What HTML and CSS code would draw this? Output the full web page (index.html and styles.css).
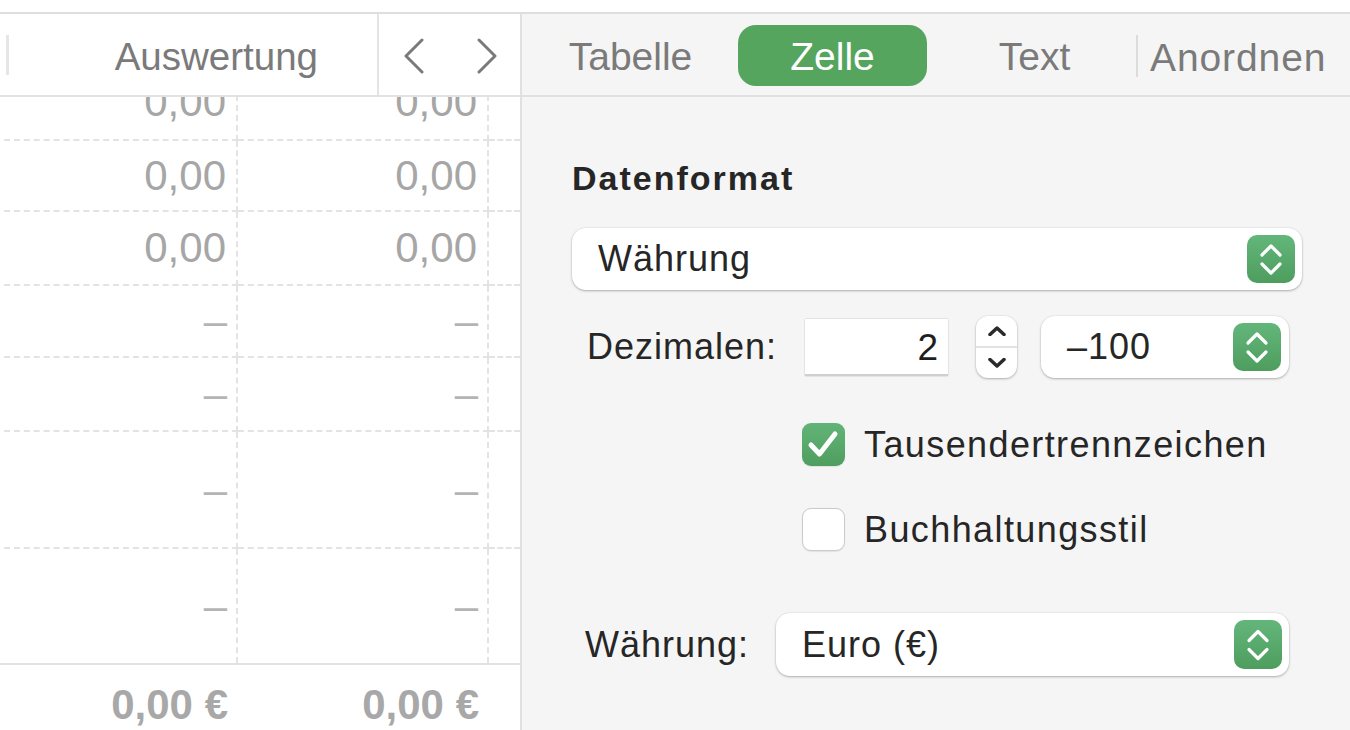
FILE: index.html
```html
<!DOCTYPE html>
<html lang="de">
<head>
<meta charset="utf-8">
<title>Zelle – Datenformat</title>
<link rel="stylesheet" href="styles.css">
</head>
<body>
<div class="app">
  <div class="topstrip"></div>
  <div class="main">
    <section class="sheet">
      <div class="sheet-bar">
        <span class="bar-mark"></span>
        <div class="sheet-title">Auswertung</div>
        <span class="vdiv"></span>
        <div class="nav">
          <svg class="nav-icon" viewBox="0 0 21 36" width="21" height="36"><polyline points="19,2 3,18 19,34"/></svg>
          <svg class="nav-icon" viewBox="0 0 21 36" width="21" height="36"><polyline points="2,2 18,18 2,34"/></svg>
        </div>
      </div>
      <div class="sheet-body">
        <div class="grid">
          <div class="cell">0,00</div><div class="cell">0,00</div><div class="cell"></div>
          <div class="cell">0,00</div><div class="cell">0,00</div><div class="cell"></div>
          <div class="cell">0,00</div><div class="cell">0,00</div><div class="cell"></div>
          <div class="cell dash">–</div><div class="cell dash">–</div><div class="cell"></div>
          <div class="cell dash">–</div><div class="cell dash">–</div><div class="cell"></div>
          <div class="cell dash">–</div><div class="cell dash">–</div><div class="cell"></div>
          <div class="cell dash last">–</div><div class="cell dash last">–</div><div class="cell last"></div>
        </div>
        <div class="footer">
          <div class="fcell">0,00 €</div><div class="fcell">0,00 €</div><div class="fcell"></div>
        </div>
      </div>
    </section>
    <aside class="panel">
      <nav class="tabs">
        <div class="tab">Tabelle</div>
        <div class="tab active">Zelle</div>
        <div class="tab">Text</div>
        <span class="tab-sep"></span>
        <div class="tab-last">Anordnen</div>
      </nav>
      <div class="panel-body">
        <div class="heading">Datenformat</div>
        <div class="popup popup-main">
          <span class="popup-text">Währung</span>
          <span class="popup-btn"><svg viewBox="0 0 48 48"><polyline points="15,20 24,11 33,20"/><polyline points="15,29 24,38 33,29"/></svg></span>
        </div>
        <div class="row decimals">
          <span class="label label-dec">Dezimalen:</span>
          <div class="field">2</div>
          <div class="stepper">
            <span class="step"><svg viewBox="0 0 18 10" width="18" height="10"><polyline points="2,8.5 9,2 16,8.5"/></svg></span>
            <span class="step step-down"><svg viewBox="0 0 18 10" width="18" height="10"><polyline points="2,1.5 9,8 16,1.5"/></svg></span>
          </div>
          <div class="popup popup-neg">
            <span class="popup-text">–100</span>
            <span class="popup-btn"><svg viewBox="0 0 48 48"><polyline points="15,20 24,11 33,20"/><polyline points="15,29 24,38 33,29"/></svg></span>
          </div>
        </div>
        <div class="check-row first">
          <span class="box checked"><svg viewBox="0 0 43 43" width="43" height="43"><polyline points="9,22 17.5,31 33,11"/></svg></span>
          <span class="check-label">Tausendertrennzeichen</span>
        </div>
        <div class="check-row second">
          <span class="box"></span>
          <span class="check-label">Buchhaltungsstil</span>
        </div>
        <div class="row currency">
          <span class="label label-cur">Währung:</span>
          <div class="popup popup-cur">
            <span class="popup-text">Euro (€)</span>
            <span class="popup-btn"><svg viewBox="0 0 48 48"><polyline points="15,20 24,11 33,20"/><polyline points="15,29 24,38 33,29"/></svg></span>
          </div>
        </div>
      </div>
    </aside>
  </div>
</div>
</body>
</html>
```

FILE: styles.css
```css
* { box-sizing: border-box; }

html, body {
  margin: 0;
  padding: 0;
  background: #ffffff;
}

body {
  width: 1350px;
  height: 730px;
  overflow: hidden;
  font-family: "Liberation Sans", Arial, sans-serif;
  color: #262626;
}

.app {
  display: flex;
  flex-direction: column;
  height: 730px;
}

.topstrip {
  height: 14px;
  flex: none;
  background: #ffffff;
  border-bottom: 2px solid #dedede;
}

.main {
  flex: 1;
  display: flex;
  min-height: 0;
}

/* ---------- sheet ---------- */

.sheet {
  width: 520px;
  flex: none;
  display: flex;
  flex-direction: column;
  background: #ffffff;
}

.sheet-bar {
  height: 83px;
  flex: none;
  display: flex;
  align-items: center;
  border-bottom: 2px solid #e2e2e2;
}

.bar-mark {
  width: 3px;
  height: 40px;
  margin-left: 6px;
  background: #e6e6e6;
}

.sheet-title {
  flex: 1;
  text-align: right;
  padding-right: 59px;
  padding-top: 5px;
  font-size: 38.5px;
  color: #7a7a7a;
  line-height: 1;
}

.vdiv {
  width: 2px;
  align-self: stretch;
  background: #e4e4e4;
}

.nav {
  width: 141px;
  display: flex;
  align-items: center;
  padding-left: 24px;
  padding-top: 2px;
  gap: 53px;
}

.nav-icon polyline {
  fill: none;
  stroke: #7a7a7a;
  stroke-width: 3;
  stroke-linecap: round;
  stroke-linejoin: round;
}

.sheet-body {
  flex: 1;
  overflow: hidden;
  display: flex;
  flex-direction: column;
}

.grid {
  flex: none;
  margin-top: -32px;
  margin-left: 4px;
  display: grid;
  grid-template-columns: 234px 251px 1fr;
  grid-template-rows: 76px 71px 74px 72px 74px 117px 114px;
}

.cell {
  display: flex;
  align-items: center;
  justify-content: flex-end;
  padding-right: 10px;
  border-right: 2px dashed #e3e3e3;
  border-bottom: 2px dashed #e3e3e3;
  font-size: 42px;
  line-height: 1;
  color: #a6a6a6;
}

.cell:nth-child(3n) { border-right: none; }
.cell.last { border-bottom: none; }

.cell.dash {
  color: #b4b4b4;
  padding-right: 9px;
}

.footer {
  flex: 1;
  display: grid;
  grid-template-columns: 238px 251px 1fr;
  border-top: 2px solid #e2e2e2;
}

.fcell {
  display: flex;
  justify-content: flex-end;
  padding-top: 19px;
  padding-right: 10px;
  font-size: 42px;
  font-weight: bold;
  line-height: 1;
  color: #a8a8a8;
}

/* ---------- panel ---------- */

.panel {
  flex: 1;
  background: #f5f5f5;
  border-left: 2px solid #e0e0e0;
  display: flex;
  flex-direction: column;
}

.tabs {
  height: 83px;
  flex: none;
  display: flex;
  align-items: center;
  padding-left: 14px;
  gap: 13px;
  border-bottom: 2px solid #e0e0e0;
}

.tab {
  width: 189px;
  height: 61px;
  margin-top: 1px;
  border-radius: 18px;
  display: flex;
  align-items: center;
  justify-content: center;
  padding-top: 3px;
  font-size: 39px;
  line-height: 1;
  color: #7a7a7a;
}

.tab.active {
  background: #55a55e;
  color: #ffffff;
}

.tab-sep {
  width: 2px;
  height: 42px;
  margin-left: -6px;
  margin-top: 2px;
  background: #dcdcdc;
}

.tab-last {
  margin-left: -1px;
  margin-top: 5px;
  font-size: 39px;
  line-height: 1;
  color: #7a7a7a;
  letter-spacing: 0.9px;
}

.panel-body {
  flex: 1;
  padding: 0 48px 0 50px;
  display: flex;
  flex-direction: column;
}

.heading {
  margin-top: 64px;
  font-size: 34px;
  line-height: 34px;
  font-weight: bold;
  letter-spacing: 2px;
  color: #262626;
}

.popup {
  background: #ffffff;
  border-radius: 14px;
  display: flex;
  align-items: center;
  justify-content: space-between;
  padding-left: 26px;
  padding-right: 7px;
  box-shadow: 0 1px 2.5px rgba(0, 0, 0, 0.28), 0 0 0 0.5px rgba(0, 0, 0, 0.06);
}

.popup-text {
  font-size: 36px;
  line-height: 1;
  letter-spacing: 1px;
  color: #262626;
}

.popup-btn {
  width: 48px;
  height: calc(100% - 14px);
  border-radius: 10px;
  background: linear-gradient(#63b67a, #4e9d5f);
  display: flex;
}

.popup-btn svg {
  width: 100%;
  height: 100%;
}

.popup-btn polyline {
  fill: none;
  stroke: #ffffff;
  stroke-width: 3.2;
  stroke-linecap: round;
  stroke-linejoin: round;
}

.popup-main {
  margin-top: 33px;
  height: 62px;
}

.row {
  display: flex;
  align-items: center;
}

.label {
  font-size: 36px;
  line-height: 1;
  letter-spacing: 1px;
  color: #262626;
}

.decimals {
  margin-top: 26px;
  height: 62px;
}

.label-dec {
  margin-left: 15px;
  width: 218px;
}

.field {
  width: 143px;
  height: 57px;
  background: #ffffff;
  border-bottom: 2px solid #cfcfcf;
  box-shadow: 0 0 1.5px rgba(0, 0, 0, 0.25);
  display: flex;
  align-items: center;
  justify-content: flex-end;
  padding-right: 10px;
  padding-top: 2px;
  font-size: 37px;
  line-height: 1;
  color: #1e1e1e;
}

.stepper {
  margin-left: 28px;
  width: 41px;
  height: 62px;
  background: #ffffff;
  border-radius: 12px;
  box-shadow: 0 1px 2.5px rgba(0, 0, 0, 0.28), 0 0 0 0.5px rgba(0, 0, 0, 0.06);
  display: flex;
  flex-direction: column;
}

.step {
  flex: 1;
  display: flex;
  align-items: center;
  justify-content: center;
}

.step-down {
  border-top: 2px solid #e2e2e2;
}

.step polyline {
  fill: none;
  stroke: #2a2a2a;
  stroke-width: 3.5;
  stroke-linecap: round;
  stroke-linejoin: round;
}

.popup-neg {
  margin-left: 24px;
  width: 248px;
  height: 62px;
  padding-right: 8px;
}

.check-row {
  display: flex;
  align-items: center;
  height: 43px;
  padding-left: 230px;
}

.check-row.first { margin-top: 45px; }
.check-row.second { margin-top: 42px; }

.box {
  width: 43px;
  height: 43px;
  flex: none;
  border-radius: 9px;
  background: #ffffff;
  border: 1.5px solid #cbcbcb;
  box-shadow: 0 0.5px 1px rgba(0, 0, 0, 0.08);
}

.box.checked {
  border: none;
  background: linear-gradient(#62b476, #4f9e60);
  display: flex;
}

.box.checked polyline {
  fill: none;
  stroke: #ffffff;
  stroke-width: 5;
  stroke-linecap: round;
  stroke-linejoin: round;
}

.check-label {
  margin-left: 19px;
  font-size: 36px;
  line-height: 1;
  letter-spacing: 1.4px;
  color: #262626;
}

.currency {
  margin-top: 62px;
  height: 63px;
}

.label-cur {
  margin-left: 13px;
  width: 191px;
}

.popup-cur {
  width: 513px;
  height: 63px;
}
```
